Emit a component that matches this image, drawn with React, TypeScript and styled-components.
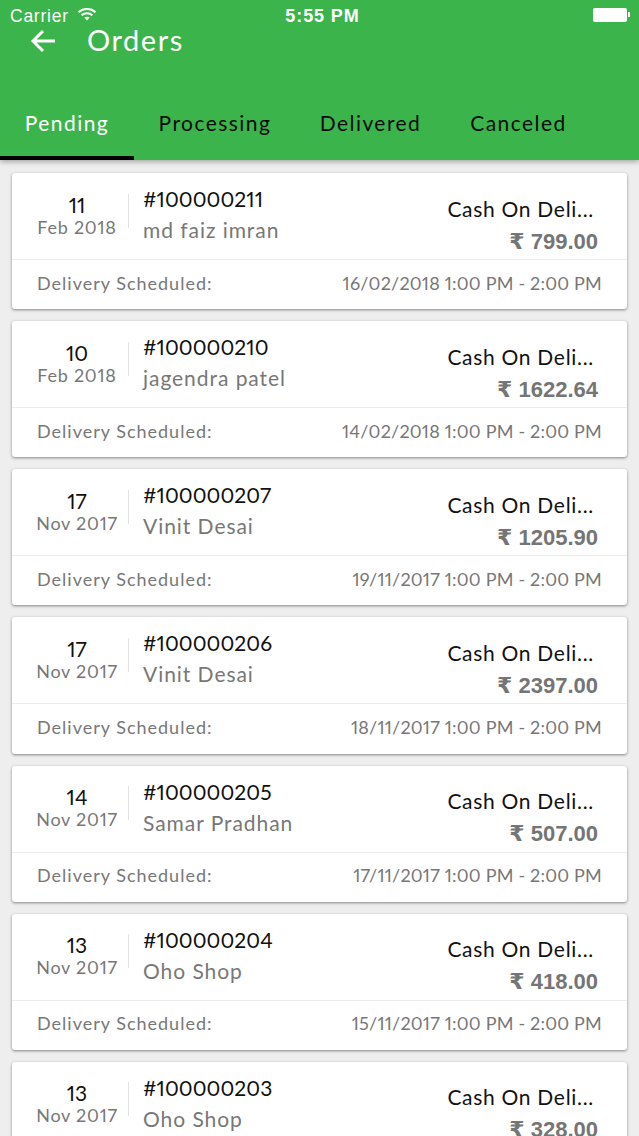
import React from "react";
import styled, { createGlobalStyle } from "styled-components";

const GlobalStyle = createGlobalStyle`
  html, body {
    margin: 0;
    padding: 0;
    height: 1136px;
    overflow: hidden;
    background: #eeeeee;
    font-family: "Lato", "Liberation Sans", sans-serif;
    font-variant-numeric: proportional-nums;
  }
`;

type Order = {
  day: string;
  month: string;
  id: string;
  name: string;
  price: string;
  schedule: string;
};

const orders: Order[] = [
  { day: "11", month: "Feb 2018", id: "#100000211", name: "md faiz imran", price: "799.00", schedule: "16/02/2018 1:00 PM - 2:00 PM" },
  { day: "10", month: "Feb 2018", id: "#100000210", name: "jagendra patel", price: "1622.64", schedule: "14/02/2018 1:00 PM - 2:00 PM" },
  { day: "17", month: "Nov 2017", id: "#100000207", name: "Vinit Desai", price: "1205.90", schedule: "19/11/2017 1:00 PM - 2:00 PM" },
  { day: "17", month: "Nov 2017", id: "#100000206", name: "Vinit Desai", price: "2397.00", schedule: "18/11/2017 1:00 PM - 2:00 PM" },
  { day: "14", month: "Nov 2017", id: "#100000205", name: "Samar Pradhan", price: "507.00", schedule: "17/11/2017 1:00 PM - 2:00 PM" },
  { day: "13", month: "Nov 2017", id: "#100000204", name: "Oho Shop", price: "418.00", schedule: "15/11/2017 1:00 PM - 2:00 PM" },
  { day: "13", month: "Nov 2017", id: "#100000203", name: "Oho Shop", price: "328.00", schedule: "15/11/2017 1:00 PM - 2:00 PM" },
];

const tabs = ["Pending", "Processing", "Delivered", "Canceled"];

const App = () => {
  return (
    <>
      <GlobalStyle />
      <Page>
        <Header>
          <StatusBar>
            <Carrier>
              Carrier
              <svg width="20" height="14" viewBox="0 0 20 14" fill="none" stroke="#fff" strokeWidth="2">
                <path d="M1.5 5.2C6.2 .9 13.8 .9 18.5 5.2" />
                <path d="M4.6 8.2C7.6 5.5 12.4 5.5 15.4 8.2" />
                <path d="M10 13.4 7.3 10.6C8.8 9.5 11.2 9.5 12.7 10.6Z" fill="#fff" stroke="none" />
              </svg>
            </Carrier>
            <Clock>5:55 PM</Clock>
            <Battery>
              <BatteryBody />
              <BatteryTip />
            </Battery>
          </StatusBar>
          <TitleRow>
            <svg width="26" height="26" viewBox="0 0 26 26" fill="none" stroke="#fff" strokeWidth="3">
              <path d="M25 13H3M13 3 3 13l10 10" />
            </svg>
            <Title>Orders</Title>
          </TitleRow>
          <TabBar>
            {tabs.map((t, i) => (
              <Tab key={t} $active={i === 0}>{t}</Tab>
            ))}
          </TabBar>
        </Header>
        <List>
          {orders.map((o) => (
            <Card key={o.id}>
              <CardTop>
                <DateCol>
                  <Day>{o.day}</Day>
                  <Month>{o.month}</Month>
                </DateCol>
                <Info>
                  <OrderId>{o.id}</OrderId>
                  <Customer>{o.name}</Customer>
                </Info>
                <Payment>
                  <Method>Cash On Deli...</Method>
                  <Price>₹ {o.price}</Price>
                </Payment>
              </CardTop>
              <CardBottom>
                <span>Delivery Scheduled:</span>
                <Schedule>{o.schedule}</Schedule>
              </CardBottom>
            </Card>
          ))}
        </List>
      </Page>
    </>
  );
};

export default App;

const Page = styled.div`
  width: 639px;
  height: 1136px;
  overflow: hidden;
`;

const Header = styled.header`
  position: relative;
  z-index: 1;
  height: 160px;
  background: #3bb54b;
  box-shadow: 0 2px 5px rgba(0, 0, 0, 0.3);
  color: #fff;
`;

const StatusBar = styled.div`
  display: grid;
  grid-template-columns: 1fr auto 1fr;
  align-items: center;
  height: 32px;
  padding: 0 9px 0 10px;
  box-sizing: border-box;
  font-family: "Liberation Sans", Arial, sans-serif;
  font-size: 17.5px;
  letter-spacing: 0.75px;
`;

const Carrier = styled.div`
  display: flex;
  align-items: center;
  gap: 8px;

  svg {
    margin-top: -4px;
  }
`;

const Clock = styled.div`
  margin-left: 5px;
  font-weight: 700;
  font-size: 18px;
  letter-spacing: 0.9px;
`;

const Battery = styled.div`
  display: flex;
  align-items: center;
  justify-content: flex-end;
  gap: 1px;
  margin-top: -3px;
`;

const BatteryBody = styled.div`
  width: 34px;
  height: 14px;
  border-radius: 2px;
  background: #fff;
`;

const BatteryTip = styled.div`
  width: 2px;
  height: 5px;
  background: #fff;
`;

const TitleRow = styled.div`
  display: flex;
  align-items: center;
  height: 18px;
  padding-left: 30px;

  svg {
    flex: none;
  }
`;

const Title = styled.h1`
  margin: -3px 0 0 31px;
  font-size: 29px;
  font-weight: 400;
  letter-spacing: 1.55px;
`;

const TabBar = styled.div`
  display: grid;
  grid-template-columns: 134px 162px 149px 147px;
  margin-top: 56px;
`;

const Tab = styled.div<{ $active: boolean }>`
  height: 54px;
  padding-top: 3px;
  box-sizing: border-box;
  text-align: center;
  line-height: 27px;
  font-size: 21px;
  letter-spacing: 1.45px;
  color: ${(p) => (p.$active ? "#fff" : "#0b0b0b")};
  border-bottom: 4px solid ${(p) => (p.$active ? "#000" : "transparent")};
`;

const List = styled.main`
  display: flex;
  flex-direction: column;
  gap: 12px;
  padding: 13px 12px 0;
`;

const Card = styled.article`
  flex: none;
  height: 136.17px;
  display: flex;
  flex-direction: column;
  background: #fff;
  border-radius: 3px;
  box-shadow: 0 1px 3px rgba(0, 0, 0, 0.45);
`;

const CardTop = styled.div`
  height: 87px;
  flex: none;
  display: flex;
  align-items: center;
  border-bottom: 1px solid #ececec;
  box-sizing: border-box;
`;

const DateCol = styled.div`
  flex: none;
  width: 102px;
  height: 34px;
  margin-top: -11px;
  padding-left: 14px;
  display: flex;
  flex-direction: column;
  align-items: center;
  justify-content: center;
  border-right: 1px solid #e2e2e2;
  box-sizing: content-box;
`;

const Day = styled.div`
  flex: none;
  font-size: 21px;
  line-height: 24px;
  margin-top: 8px;
  color: #111;
`;

const Month = styled.div`
  flex: none;
  font-size: 18px;
  line-height: 20px;
  letter-spacing: 0.75px;
  color: #777;
`;

const Info = styled.div`
  flex: 1;
  padding-left: 14px;
  margin-top: -3px;
`;

const OrderId = styled.div`
  font-size: 21px;
  line-height: 26px;
  letter-spacing: 0.05px;
  color: #111;
`;

const Customer = styled.div`
  margin-top: 5px;
  font-size: 21px;
  line-height: 26px;
  letter-spacing: 0.95px;
  color: #777;
`;

const Payment = styled.div`
  flex: none;
  display: flex;
  flex-direction: column;
  align-items: flex-end;
  padding: 18px 29px 0 0;
`;

const Method = styled.div`
  margin-right: 4px;
  font-size: 21px;
  line-height: 26px;
  letter-spacing: 0.7px;
  color: #111;
`;

const Price = styled.div`
  margin-top: 7px;
  font-family: "Liberation Sans", "DejaVu Sans", sans-serif;
  font-size: 22px;
  line-height: 26px;
  font-weight: 700;
  color: #757575;
`;

const CardBottom = styled.div`
  flex: 1;
  display: flex;
  align-items: center;
  justify-content: space-between;
  padding: 0 25px 4px;
  font-size: 18px;
  letter-spacing: 1px;
  color: #777;
`;

const Schedule = styled.span`
  letter-spacing: 0.2px;
`;
